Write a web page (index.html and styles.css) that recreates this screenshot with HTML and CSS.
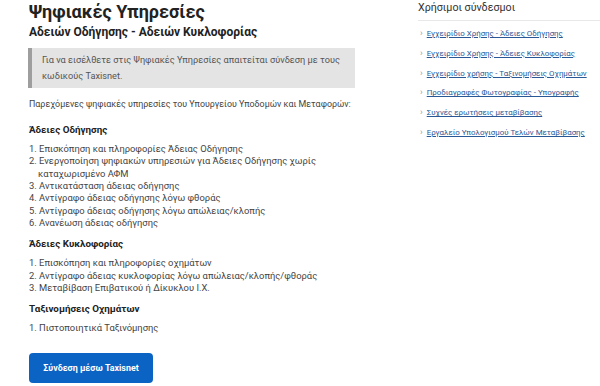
FILE: index.html
```html
<!DOCTYPE html>
<html lang="el">
<head>
    <meta charset="UTF-8">
    <meta name="viewport" content="width=device-width, initial-scale=1.0">
    <title>Ψηφιακές Υπηρεσίες</title>
    <link rel="stylesheet" href="styles.css">
</head>
<body>
    <div class="page">
        <main class="main-col">
            <h1>Ψηφιακές Υπηρεσίες</h1>
            <h2>Αδειών Οδήγησης - Αδειών Κυκλοφορίας</h2>

            <div class="notice">
                Για να εισέλθετε στις Ψηφιακές Υπηρεσίες απαιτείται σύνδεση με τους κωδικούς Taxisnet.
            </div>

            <p class="intro">Παρεχόμενες ψηφιακές υπηρεσίες του Υπουργείου Υποδομών και Μεταφορών:</p>

            <h3>Άδειες Οδήγησης</h3>
            <ol class="services">
                <li>Επισκόπηση και πληροφορίες Άδειας Οδήγησης</li>
                <li>Ενεργοποίηση ψηφιακών υπηρεσιών για Άδειες Οδήγησης χωρίς καταχωρισμένο ΑΦΜ</li>
                <li>Αντικατάσταση άδειας οδήγησης</li>
                <li>Αντίγραφο άδειας οδήγησης λόγω φθοράς</li>
                <li>Αντίγραφο άδειας οδήγησης λόγω απώλειας/κλοπής</li>
                <li>Ανανέωση άδειας οδήγησης</li>
            </ol>

            <h3>Άδειες Κυκλοφορίας</h3>
            <ol class="services">
                <li>Επισκόπηση και πληροφορίες οχημάτων</li>
                <li>Αντίγραφο άδειας κυκλοφορίας λόγω απώλειας/κλοπής/φθοράς</li>
                <li>Μεταβίβαση Επιβατικού ή Δίκυκλου Ι.Χ.</li>
            </ol>

            <h3>Ταξινομήσεις Οχημάτων</h3>
            <ol class="services">
                <li>Πιστοποιητικά Ταξινόμησης</li>
            </ol>

            <button class="login-btn">Σύνδεση μέσω Taxisnet</button>
        </main>

        <aside class="side-col">
            <h4>Χρήσιμοι σύνδεσμοι</h4>
            <ul class="links">
                <li><a href="#">Εγχειρίδιο Χρήσης - Άδειες Οδήγησης</a></li>
                <li><a href="#">Εγχειρίδιο Χρήσης - Άδειες Κυκλοφορίας</a></li>
                <li><a href="#">Εγχειρίδιο χρήσης - Ταξινομήσεις Οχημάτων</a></li>
                <li><a href="#">Προδιαγραφές Φωτογραφίας - Υπογραφής</a></li>
                <li><a href="#">Συχνές ερωτήσεις μεταβίβασης</a></li>
                <li><a href="#">Εργαλείο Υπολογισμού Τελών Μεταβίβασης</a></li>
            </ul>
        </aside>
    </div>
</body>
</html>
```

FILE: styles.css
```css
* {
    margin: 0;
    padding: 0;
    box-sizing: border-box;
    font-family: Roboto, "Noto Sans", Arial, sans-serif;
}

body {
    background: white;
    color: #333;
    overflow: hidden;
}

.page {
    display: grid;
    grid-template-columns: 327px 1fr;
    column-gap: 63px;
    padding-left: 28px;
}

/* main column */
.main-col {
    display: flex;
    flex-direction: column;
    align-items: flex-start;
}

.main-col h1 {
    font-size: 18px;
    font-weight: 700;
    color: #222;
    line-height: 24px;
    padding-left: 1px;
}

.main-col h2 {
    font-size: 12px;
    font-weight: 700;
    color: #222;
    line-height: 16px;
    padding-left: 1px;
}

.notice {
    align-self: stretch;
    margin-top: 8px;
    background: #e4e4e4;
    border-left: 4px solid #9e9e9e;
    padding: 4px 10px 4px 10px;
    font-size: 9.2px;
    line-height: 16px;
    color: #555;
}

.intro {
    margin-top: 9px;
    margin-bottom: 4px;
    font-size: 8.9px;
    line-height: 14px;
    color: #444;
    padding-left: 1px;
    white-space: nowrap;
}

.main-col h3 {
    margin-top: 8px;
    font-size: 9.8px;
    font-weight: 700;
    line-height: 14px;
    color: #222;
    padding-left: 1px;
}

.services {
    margin-top: 6px;
    list-style: none;
    counter-reset: item;
    font-size: 9.4px;
    line-height: 12.33px;
    color: #444;
    padding-left: 1px;
}

.services li {
    counter-increment: item;
    padding-left: 9px;
    text-indent: -9px;
}

.services li::before {
    content: counter(item) ". ";
}

.login-btn {
    margin-top: 18px;
    margin-left: 1px;
    width: 124px;
    height: 30px;
    background: #0b63c4;
    border: none;
    border-radius: 4px;
    color: white;
    font-size: 8.9px;
    font-weight: 700;
    cursor: pointer;
}

/* side column */
.side-col h4 {
    font-size: 10.7px;
    font-weight: 400;
    color: #333;
    line-height: 14px;
    padding-top: 1px;
    padding-bottom: 5px;
    border-bottom: 1px solid #e8e8e8;
}

.links {
    list-style: none;
    margin-top: 3px;
}

.links li {
    font-size: 7.9px;
    line-height: 18.8px;
    padding-left: 2px;
}

.links li::before {
    content: "›";
    color: #999;
    margin-right: 4px;
    font-size: 9px;
}

.links a {
    color: #2a5896;
    text-decoration: underline;
}
```
